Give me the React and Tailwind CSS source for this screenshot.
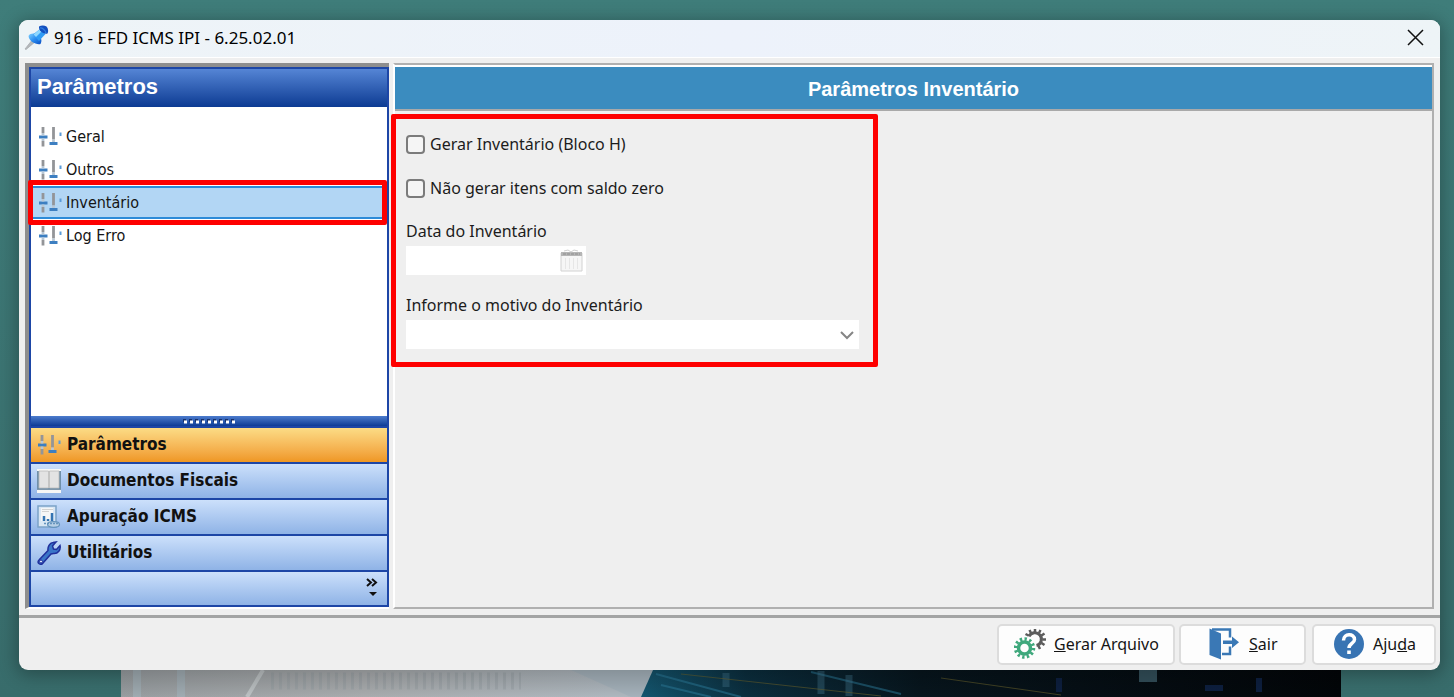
import { useState } from "react";

const menuItems = ["Geral", "Outros", "Inventário", "Log Erro"];

const PinIcon = () => (
  <svg width="26" height="26" viewBox="0 0 26 26">
    <defs>
      <linearGradient id="pin" x1="0" y1="0" x2="1" y2="1">
        <stop offset="0" stopColor="#7fd0ff" />
        <stop offset="0.5" stopColor="#2a8cf0" />
        <stop offset="1" stopColor="#0b4fc4" />
      </linearGradient>
    </defs>
    <path d="M1 24L9 14L11.500 16.500L2 24.500Z" fill="#b4b8bb" stroke="#a8acb0" strokeWidth="0.800" />
    <path d="M4.500 11C6 8 11 8 14 10C17 12.500 18.500 15 16.500 19C12 20 5 16.500 4.500 11Z" fill="url(#pin)" />
    <path d="M9 9.500L16 4L21.500 9L15 16Z" fill="#2f9bf5" />
    <path d="M9.500 9.500L15.500 4.500L17.500 6.500L12 12Z" fill="#8fd8ff" />
    <path d="M15 1.500C17 0 20.500 0 22.500 1.500C24.500 3.500 24.500 7 23.500 8.500C19.500 9.500 14.500 6 15 1.500Z" fill="#1250c0" />
    <path d="M16 3C18 2.500 21.500 5 22 8" fill="none" stroke="#2f7fe0" strokeWidth="1.200" />
  </svg>
);

const SlidersIcon = () => (
  <svg width="24" height="24" viewBox="0 0 24 24" className="shrink-0">
    <path d="M5 2V8M5 16V21.500M15.500 2V14.500" stroke="#939598" strokeWidth="2.800" />
    <path d="M1 12H9.500M11.500 18.500H19.500" stroke="#3d7fc1" strokeWidth="3.200" />
    <path d="M5 8V10.500M5 13.500V16M15.500 14.500V17" stroke="#b9c7d4" strokeWidth="2.800" />
    <path d="M22.500 7.500V11" stroke="#5b9bd8" strokeWidth="2" />
  </svg>
);

const BookIcon = () => (
  <svg width="24" height="24" viewBox="0 0 24 24" className="shrink-0">
    <path d="M0 0H24V24H0Z" fill="#f7f7f5" />
    <path d="M0 2V21H24V2H22V19H2V2Z" fill="#6f8fa9" />
    <path d="M2 2H11.500V19H2ZM12.500 2H22V19H12.500Z" fill="#e3e3e3" stroke="#bababa" strokeWidth="0.800" />
    <path d="M0 20.500H24" fill="none" stroke="#7f97ab" strokeWidth="1" />
  </svg>
);

const ReportIcon = () => (
  <svg width="24" height="24" viewBox="0 0 24 24" className="shrink-0">
    <path d="M1 1H19V22H1Z" fill="#d9e7f4" stroke="#7ba3c8" strokeWidth="1.500" />
    <path d="M4 3H16V16H4Z" fill="#f5f6f7" />
    <path d="M5 4.500H16M5 6.500H12" stroke="#d2d2d2" strokeWidth="1" />
    <path d="M7 11V16M11 14V16M15 8V16" stroke="#3474b2" strokeWidth="2.500" />
    <ellipse cx="16.500" cy="19.500" rx="6" ry="2.800" fill="#b8d0e6" stroke="#6594bd" strokeWidth="1.200" />
    <path d="M7 18.500H21" stroke="#6594bd" strokeWidth="1.500" strokeDasharray="2 1" />
  </svg>
);

const WrenchIcon = () => (
  <svg width="24" height="24" viewBox="0 0 24 24" className="shrink-0">
    <path
      d="M2 19L11 9.500C10.500 6 12.500 2 16 1.500L19 1L15.500 5L16.500 8L19.500 8.500L23 4.500C24 8.500 21 13 16.500 12.500L14 13L6 22C4 25 -1 22 2 19Z"
      fill="#3a76c8"
      stroke="#20309c"
      strokeWidth="1.500"
    />
    <circle cx="4" cy="20.500" r="1.500" fill="#dce8fa" stroke="#20309c" strokeWidth="1" />
  </svg>
);

const GearsIcon = () => (
  <svg width="32" height="30" viewBox="0 0 32 30">
    <g fill="none" stroke="#5c5c5c">
      <path d="M15 7.500A6.500 6.500 0 1 1 22.500 16.500" strokeWidth="3" />
      <path
        d="M14.500 6.500L11.500 5M17 4L15.500 1M21 3V0M25 4L26.500 1M27.500 6.500L30.500 4.500M28.500 10.500H32M27.500 14L30.500 16M24.500 17L26 20"
        strokeWidth="2.500"
      />
    </g>
    <g fill="none" stroke="#3fa87c">
      <circle cx="10.500" cy="19" r="6" strokeWidth="3.500" />
      <circle cx="10.500" cy="19" r="9" strokeWidth="3.500" pathLength="24" strokeDasharray="1 1" />
    </g>
  </svg>
);

const DoorIcon = () => (
  <svg width="30" height="32" viewBox="0 0 30 32">
    <path d="M3 1.500H21V9.500M21 18.500V26H13" fill="none" stroke="#3a78b5" strokeWidth="2.500" />
    <path d="M0.500 0.500L12 5.500V31.500L0.500 27Z" fill="#3a78b5" />
    <path d="M14 12.500H23V8.500L30 14.200L23 20V16H14Z" fill="#3a78b5" />
  </svg>
);

const HelpIcon = () => (
  <svg width="32" height="32" viewBox="0 0 32 32">
    <circle cx="16" cy="16" r="15" fill="#3874b3" />
    <path d="M10.500 12.500C10.500 5 21.500 5 21.500 11.500C21.500 15.500 16 15.500 16 20" fill="none" stroke="#fff" strokeWidth="3.500" />
    <path d="M14.200 22.500H17.800V26H14.200Z" fill="#fff" />
  </svg>
);

const CalendarIcon = () => (
  <svg width="24" height="24" viewBox="0 0 24 24">
    <path d="M1 4H22V22H1Z" fill="#f6f6f6" stroke="#d2d2d2" />
    <path d="M1 3H22V7H1Z" fill="#b5b5b5" />
    <path d="M4 2L8 1L11 3L14 1L18 2" fill="none" stroke="#cfcfcf" />
    <path d="M3 5H20" stroke="#8d8d8d" strokeDasharray="3 1" />
    <path d="M5.500 9V20M9.500 9V20M13.500 9V20M17.500 9V20" stroke="#e6e6e6" />
  </svg>
);

const Wallpaper = () => (
  <svg className="block h-full w-full" viewBox="0 0 1220 27" preserveAspectRatio="none">
    <defs>
      <linearGradient id="paper" x1="0" x2="1">
        <stop offset="0" stopColor="#989da0" />
        <stop offset="0.200" stopColor="#a9acae" />
        <stop offset="0.400" stopColor="#aeb7be" />
      </linearGradient>
      <linearGradient id="night" x1="0" x2="1">
        <stop offset="0" stopColor="#14566f" />
        <stop offset="0.150" stopColor="#0b2e3e" />
        <stop offset="0.400" stopColor="#07151d" />
        <stop offset="1" stopColor="#020508" />
      </linearGradient>
      <linearGradient id="shade" x1="0" y1="0" x2="0" y2="1">
        <stop offset="0" stopColor="#000" stopOpacity="0.180" />
        <stop offset="1" stopColor="#000" stopOpacity="0" />
      </linearGradient>
    </defs>
    <path d="M0 0H1220V27H0Z" fill="url(#paper)" />
    <path d="M142 0L126 27" stroke="#bcc1c3" strokeWidth="4" />
    <path d="M450 0H535L525 27H510Z" fill="#a5b2bb" />
    <path d="M16 0V27M60 0V27" stroke="#a2b1b9" strokeWidth="8" opacity="0.700" />
    <path d="M150 11H400" stroke="#8e989d" strokeWidth="17" strokeDasharray="3 5" opacity="0.350" />
    <path d="M532 0H1220V27H520Z" fill="url(#night)" />
    <path d="M535 4L620 27M690 2L780 24M540 15L590 27" stroke="#2d7f9f" strokeWidth="2" opacity="0.500" />
    <path d="M605 3V17M700 1V24M728 5V26" stroke="#42768e" strokeWidth="7" opacity="0.400" />
    <path d="M560 4L760 26M820 8L940 25" stroke="#68612c" strokeWidth="1" opacity="0.600" />
    <path d="M1018 0H1036V12H1018Z" fill="#324e59" />
    <path d="M938 8V22M1084 18H1102M1138 8V22" stroke="#0d1f3f" strokeWidth="6" />
    <path d="M0 0H1220V27H0Z" fill="url(#shade)" />
  </svg>
);

const sections = [
  { label: "Parâmetros", icon: SlidersIcon, active: true },
  { label: "Documentos Fiscais", icon: BookIcon },
  { label: "Apuração ICMS", icon: ReportIcon },
  { label: "Utilitários", icon: WrenchIcon },
];

const footerButton =
  "flex h-[41px] items-center rounded-[5px] border-2 border-[#dcdcdc] bg-[#fdfdfd] text-base text-[#151515]";

export default function App() {
  const [selected, setSelected] = useState("Inventário");
  const [gerar, setGerar] = useState(false);
  const [semZero, setSemZero] = useState(false);
  const [data, setData] = useState("");
  const [motivo, setMotivo] = useState("");

  const checkbox =
    "size-[19px] appearance-none rounded-[4px] border-2 border-[#7b7b7b] bg-[#f5f5f5] checked:bg-[#3874b3]";

  return (
    <main className="flex min-h-screen flex-col bg-linear-to-b from-[#3f7d7a] to-[#386c6b] pt-5 font-['Noto_Sans',sans-serif]">
      <section className="mr-[14px] ml-[19px] flex flex-1 flex-col overflow-hidden rounded-[9px] bg-[#efefef] shadow-[0_3px_18px_2px_rgba(0,0,0,0.3)]">
        <header className="flex h-[38px] items-center border-b border-white bg-linear-to-r from-[#eef4f7] via-[#edf2fb] to-[#eef4f7] pr-4 pb-[2px] pl-[5px]">
          <PinIcon />
          <h1 className="ml-1 flex-1 text-[17px] text-black">916 - EFD ICMS IPI - 6.25.02.01</h1>
          <button type="button" aria-label="Fechar">
            <svg width="17" height="17" viewBox="0 0 17 17" fill="none" stroke="#111" strokeWidth="1.500">
              <path d="M1 1L16 16M16 1L1 16" />
            </svg>
          </button>
        </header>

        <div className="flex flex-1 gap-1 border-b-[3px] border-[#a3a4a4] px-[6px] pt-[5px] pb-[6px]">
          <aside className="flex w-[364px] shrink-0 flex-col border-t-4 border-l-4 border-[#8e8e8e] border-b-2 border-b-white">
            <nav className="flex flex-1 flex-col border-2 border-[#1d46a6] bg-white">
              <h2 className="flex h-[38px] items-center bg-linear-to-b from-[#5585d5] to-[#0c3b93] pb-1 pl-[6px] font-['Liberation_Sans',sans-serif] text-[22px] font-bold text-white">
                Parâmetros
              </h2>
              <ul className="flex-1 pt-[13px] pr-[3px]">
                {menuItems.map((item) => (
                  <li key={item} className="relative h-[33px]">
                    <button
                      type="button"
                      onClick={() => setSelected(item)}
                      className={`flex h-full w-full items-center gap-1 border-2 pl-[5px] font-['DejaVu_Sans_Condensed','DejaVu_Sans',sans-serif] text-base text-[#151515] ${
                        selected === item ? "border-[#2c8bd8] bg-[#b2d6f4]" : "border-transparent"
                      }`}
                    >
                      <SlidersIcon />
                      {item}
                    </button>
                    {selected === item && (
                      <span className="pointer-events-none absolute -inset-x-[3px] -inset-y-[6px] rounded-[2px] border-5 border-[#fe0000]" />
                    )}
                  </li>
                ))}
              </ul>
              <div className="flex h-[10px] items-center justify-center bg-linear-to-b from-[#4c7ccd] to-[#0d3c95]">
                <svg width="54" height="5" viewBox="0 0 54 5">
                  <path d="M1 1.500H54" stroke="#16306b" strokeWidth="3" strokeDasharray="3 3" />
                  <path d="M2 3H54" stroke="#fff" strokeWidth="3" strokeDasharray="3 3" />
                </svg>
              </div>
              {sections.map(({ label, icon: Icon, active }) => (
                <button
                  key={label}
                  type="button"
                  className={`flex h-9 items-center gap-[6px] border-t-2 border-[#1d46a6] bg-linear-to-b pl-[6px] font-['DejaVu_Sans_Condensed','DejaVu_Sans',sans-serif] text-[17px] font-bold text-[#111] ${
                    active ? "from-[#fbdc85] to-[#ef9722]" : "from-[#cce0fb] to-[#8fb3e6]"
                  }`}
                >
                  <Icon />
                  {label}
                </button>
              ))}
              <div className="flex h-[35px] items-center justify-end border-t-2 border-[#1d46a6] bg-linear-to-b from-[#cce0fb] to-[#8fb3e6] pr-2">
                <button type="button" aria-label="Mais opções">
                  <svg width="13" height="22" viewBox="0 0 13 22">
                    <path d="M1 1L5 4.500L1 8M6 1L10 4.500L6 8" fill="none" stroke="#111" strokeWidth="2" />
                    <path d="M3 14H11L7 18Z" fill="#111" />
                  </svg>
                </button>
              </div>
            </nav>
          </aside>

          <div className="flex-1 border-2 border-t-2 border-[#b0b0b0] border-l-white">
            <h2 className="flex h-[46px] items-center justify-center border-t-2 border-b-2 border-t-white border-b-[#a9a9a9] bg-[#3b8cbf] pt-[2px] font-['Liberation_Sans',sans-serif] text-xl font-bold text-white">
              Parâmetros Inventário
            </h2>
            <form className="relative mt-[21px] ml-[11px] w-[453px] text-base text-[#1c1c1c]">
              <span className="pointer-events-none absolute -top-[18px] -right-[19px] -bottom-[18px] -left-[15px] rounded-[2px] border-5 border-[#fe0000]" />
              <label className="flex h-6 items-center gap-[5px]">
                <input type="checkbox" className={checkbox} checked={gerar} onChange={(e) => setGerar(e.target.checked)} />
                Gerar Inventário (Bloco H)
              </label>
              <label className="mt-5 flex h-6 items-center gap-[5px]">
                <input type="checkbox" className={checkbox} checked={semZero} onChange={(e) => setSemZero(e.target.checked)} />
                Não gerar itens com saldo zero
              </label>
              <label htmlFor="data" className="mt-5 mb-1 block leading-[22px]">
                Data do Inventário
              </label>
              <div className="flex h-[29px] w-[180px] items-center bg-white pr-[2px]">
                <input
                  id="data"
                  type="text"
                  className="h-full min-w-0 flex-1 px-2 outline-none"
                  value={data}
                  onChange={(e) => setData(e.target.value)}
                />
                <button type="button" aria-label="Abrir calendário">
                  <CalendarIcon />
                </button>
              </div>
              <label htmlFor="motivo" className="mt-[19px] mb-1 block leading-[22px]">
                Informe o motivo do Inventário
              </label>
              <div className="relative">
                <select
                  id="motivo"
                  className="block h-[29px] w-full appearance-none bg-white px-2 outline-none"
                  value={motivo}
                  onChange={(e) => setMotivo(e.target.value)}
                >
                  <option value=""></option>
                </select>
                <svg
                  className="pointer-events-none absolute top-[11px] right-[5px]"
                  width="14"
                  height="9"
                  viewBox="0 0 14 9"
                  fill="none"
                  stroke="#858585"
                  strokeWidth="2"
                >
                  <path d="M1 1L7 7L13 1" />
                </svg>
              </div>
            </form>
          </div>
        </div>

        <footer className="flex h-[52px] items-center justify-end gap-1 pr-1">
          <button type="button" className={`${footerButton} w-[178px] gap-2 pl-[15px]`}>
            <GearsIcon />
            <span><u>G</u>erar Arquivo</span>
          </button>
          <button type="button" className={`${footerButton} w-[127px] gap-[10px] pl-7`}>
            <DoorIcon />
            <span><u>S</u>air</span>
          </button>
          <button type="button" className={`${footerButton} ml-[2px] w-[124px] gap-2 pl-[19px]`}>
            <HelpIcon />
            <span>Aju<u>d</u>a</span>
          </button>
        </footer>
      </section>

      <div className="mr-[113px] ml-[121px] h-[27px]">
        <Wallpaper />
      </div>
    </main>
  );
}
